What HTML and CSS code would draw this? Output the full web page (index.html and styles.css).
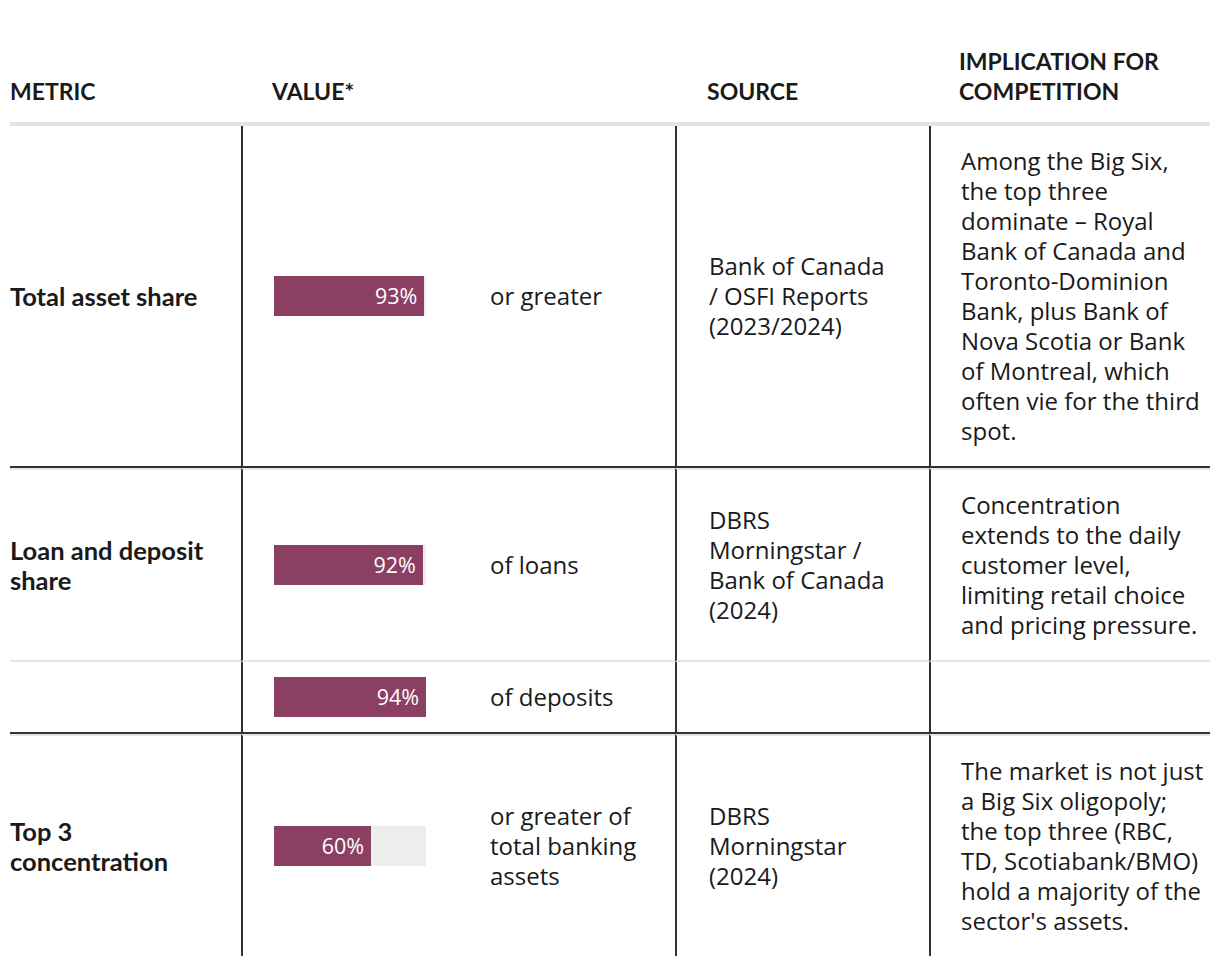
FILE: index.html
```html
<!DOCTYPE html>
<html lang="en">
<head>
<meta charset="utf-8">
<title>Bank concentration</title>
<link rel="stylesheet" href="styles.css">
</head>
<body>
<table class="data">
  <colgroup>
    <col class="c-metric">
    <col class="c-bar">
    <col class="c-text">
    <col class="c-source">
    <col class="c-impl">
  </colgroup>
  <thead>
    <tr>
      <th class="h-metric">METRIC</th>
      <th class="h-value" colspan="2">VALUE*</th>
      <th class="h-source">SOURCE</th>
      <th class="h-impl">IMPLICATION FOR COMPETITION</th>
    </tr>
  </thead>
  <tbody>
    <tr class="end-group">
      <td class="metric">Total asset share</td>
      <td class="bar-cell"><div class="track"><div class="fill" style="width:98.94%"><span>93%</span></div></div></td>
      <td class="vtext">or greater</td>
      <td class="source">Bank of Canada / OSFI Reports (2023/2024)</td>
      <td class="impl">Among the Big Six, the top three dominate – Royal Bank of Canada and Toronto-Dominion Bank, plus Bank of Nova Scotia or Bank of Montreal, which often vie for the third spot.</td>
    </tr>
    <tr class="start-group mid">
      <td class="metric">Loan and deposit share</td>
      <td class="bar-cell"><div class="track"><div class="fill" style="width:97.87%"><span>92%</span></div></div></td>
      <td class="vtext">of loans</td>
      <td class="source">DBRS Morningstar / Bank of Canada (2024)</td>
      <td class="impl">Concentration extends to the daily customer level, limiting retail choice and pricing pressure.</td>
    </tr>
    <tr class="end-group">
      <td class="metric"></td>
      <td class="bar-cell"><div class="track"><div class="fill" style="width:100%"><span>94%</span></div></div></td>
      <td class="vtext">of deposits</td>
      <td class="source"></td>
      <td class="impl"></td>
    </tr>
    <tr class="start-group">
      <td class="metric">Top 3 concentration</td>
      <td class="bar-cell"><div class="track"><div class="fill" style="width:63.83%"><span>60%</span></div></div></td>
      <td class="vtext">or greater of total banking assets</td>
      <td class="source">DBRS Morningstar (2024)</td>
      <td class="impl">The market is not just a Big Six oligopoly; the top three (RBC, TD, Scotiabank/BMO) hold a majority of the sector's assets.</td>
    </tr>
  </tbody>
</table>
</body>
</html>
```

FILE: styles.css
```css
html, body {
  margin: 0;
  padding: 0;
  background: #ffffff;
}
body {
  padding: 46px 10px 0 10px;
  font-family: "Open Sans", Lato, sans-serif;
  color: #1a1a1a;
}
.data {
  width: 1200px;
  table-layout: fixed;
  border-collapse: separate;
  border-spacing: 0;
  font-size: 24px;
  line-height: 30px;
}
.c-metric { width: 231px; }
.c-bar { width: 218px; }
.c-text { width: 216px; }
.c-source { width: 254px; }
.c-impl { width: 281px; }

th {
  text-align: left;
  vertical-align: bottom;
  font-family: Lato, "Open Sans", sans-serif;
  font-size: 23px;
  font-weight: 700;
  padding: 0 0 16px 0;
  border-bottom: 4px solid #e4e4e4;
}
.h-metric { padding-left: 0; }
.h-value { padding-left: 31px; }
.h-source { padding-left: 32px; }
.h-impl { padding-left: 30px; padding-right: 20px; }

td {
  vertical-align: middle;
  padding: 20px 0;
  box-sizing: border-box;
}
.metric {
  font-family: Lato, "Open Sans", sans-serif;
  font-size: 25.5px;
  font-weight: 700;
  padding-right: 24px;
}
.bar-cell {
  border-left: 2px solid #333333;
  padding: 15px 0 15px 31px;
}
.vtext {
  padding-left: 31px;
  padding-right: 30px;
}
.source {
  border-left: 2px solid #333333;
  padding-left: 32px;
  padding-right: 38px;
}
.impl {
  border-left: 2px solid #333333;
  padding-left: 30px;
  padding-right: 5px;
}
.end-group td {
  border-bottom: 2px solid #333333;
}
.start-group td {
  border-top: 2px solid #e6e6e6;
}
.mid td {
  border-bottom: 2px solid #e6e6e6;
}

.track {
  width: 152px;
  height: 40px;
  background: #ededed;
}
.fill {
  height: 40px;
  background: #8b3f62;
  display: flex;
  align-items: center;
  justify-content: flex-end;
  box-sizing: border-box;
  padding-right: 7px;
}
.fill span {
  color: #ffffff;
  font-size: 21.5px;
  line-height: 22px;
}
```
